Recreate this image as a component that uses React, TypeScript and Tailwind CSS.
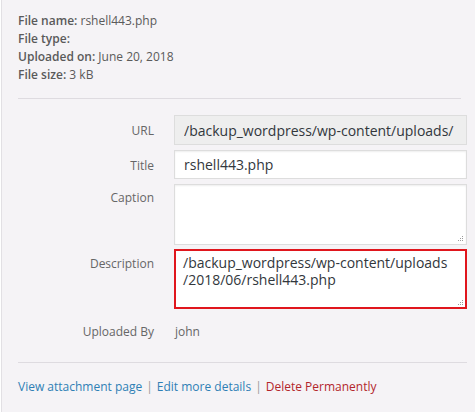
const labelCls = "w-[136px] shrink-0 text-right text-[12px] leading-[16px] text-[#666]";

// dotted resize grip like the one in the screenshot
const Grip = () => (
  <svg className="absolute right-[3px] bottom-[3px]" width="7" height="7" viewBox="0 0 7 7">
    <rect x="5" y="1" width="1" height="1" fill="#9a9a9a" />
    <rect x="3" y="3" width="1" height="1" fill="#9a9a9a" />
    <rect x="5" y="3" width="1" height="1" fill="#9a9a9a" />
    <rect x="1" y="5" width="1" height="1" fill="#9a9a9a" />
    <rect x="3" y="5" width="1" height="1" fill="#9a9a9a" />
    <rect x="5" y="5" width="1" height="1" fill="#9a9a9a" />
  </svg>
);

const AttachmentDetails = () => {
  return (
    <div
      className="w-[475px] h-[412px] overflow-hidden bg-[#f5f3f6] border-l border-[#e2e0e4] ml-px text-[#444]"
      style={{ fontFamily: '"Open Sans", "Noto Sans", sans-serif' }}
    >
      <div className="pl-[16px] pr-[9px]">
        {/* File info */}
        <div className="pt-[12px] text-[12px] leading-[18px] text-[#5a5a5a]">
          <div>
            <span className="font-semibold">File name:</span> rshell443.php
          </div>
          <div>
            <span className="font-semibold">File type:</span>
          </div>
          <div>
            <span className="font-semibold">Uploaded on:</span> June 20, 2018
          </div>
          <div>
            <span className="font-semibold">File size:</span> 3 kB
          </div>
        </div>

        <hr className="mt-[14px] mr-[6px] border-t border-[#dedbe0]" />

        {/* Settings */}
        <div className="mt-[16px] flex flex-col">
          <div className="flex gap-[20px]">
            <div className={labelCls + " pt-[8px]"}>URL</div>
            <input
              readOnly
              value="/backup_wordpress/wp-content/uploads/"
              className="w-[294px] h-[30px] px-[9px] border border-[#ddd] bg-[#eee] text-[14px] text-[#32373c] outline-none"
            />
          </div>
          <div className="flex gap-[20px] mt-[5px]">
            <div className={labelCls + " pt-[8px]"}>Title</div>
            <input
              readOnly
              value="rshell443.php"
              className="w-[294px] h-[29px] px-[9px] border border-[#ddd] bg-white text-[14px] text-[#32373c] outline-none shadow-[inset_0_1px_2px_rgba(0,0,0,0.07)]"
            />
          </div>
          <div className="flex gap-[20px] mt-[5px]">
            <div className={labelCls + " pt-[6px]"}>Caption</div>
            <div className="relative w-[294px] h-[61px]">
              <textarea
                readOnly
                className="block w-full h-full border border-[#ddd] bg-white outline-none resize-none shadow-[inset_0_1px_2px_rgba(0,0,0,0.07)]"
              />
              <Grip />
            </div>
          </div>
          <div className="flex gap-[20px] mt-[4px]">
            <div className={labelCls + " pt-[7px]"}>Description</div>
            <div className="relative w-[294px] h-[60px]">
              <textarea
                readOnly
                defaultValue={"/backup_wordpress/wp-content/uploads\n/2018/06/rshell443.php"}
                className="block w-full h-full px-[7px] py-[3px] border-2 border-[#e0161d] bg-white text-[14px] leading-[17px] text-[#32373c] outline-none resize-none whitespace-pre overflow-hidden"
              />
              <Grip />
            </div>
          </div>
          <div className="flex gap-[20px] mt-[15px]">
            <div className={labelCls}>Uploaded By</div>
            <div className="text-[12px] leading-[16px] text-[#666] pl-px">john</div>
          </div>
        </div>

        <hr className="mt-[22px] border-t border-[#dedbe0]" />

        {/* Actions */}
        <div className="mt-[16px] text-[12px] leading-[16px] text-[#999]">
          <a href="#" className="text-[#2f7fb5]">View attachment page</a>
          <span className="mx-[4px]">|</span>
          <a href="#" className="text-[#2f7fb5]">Edit more details</a>
          <span className="mx-[4px]">|</span>
          <a href="#" className="text-[#b3262c]">Delete Permanently</a>
        </div>
      </div>
    </div>
  );
};

export default function App() {
  return <AttachmentDetails />;
}
